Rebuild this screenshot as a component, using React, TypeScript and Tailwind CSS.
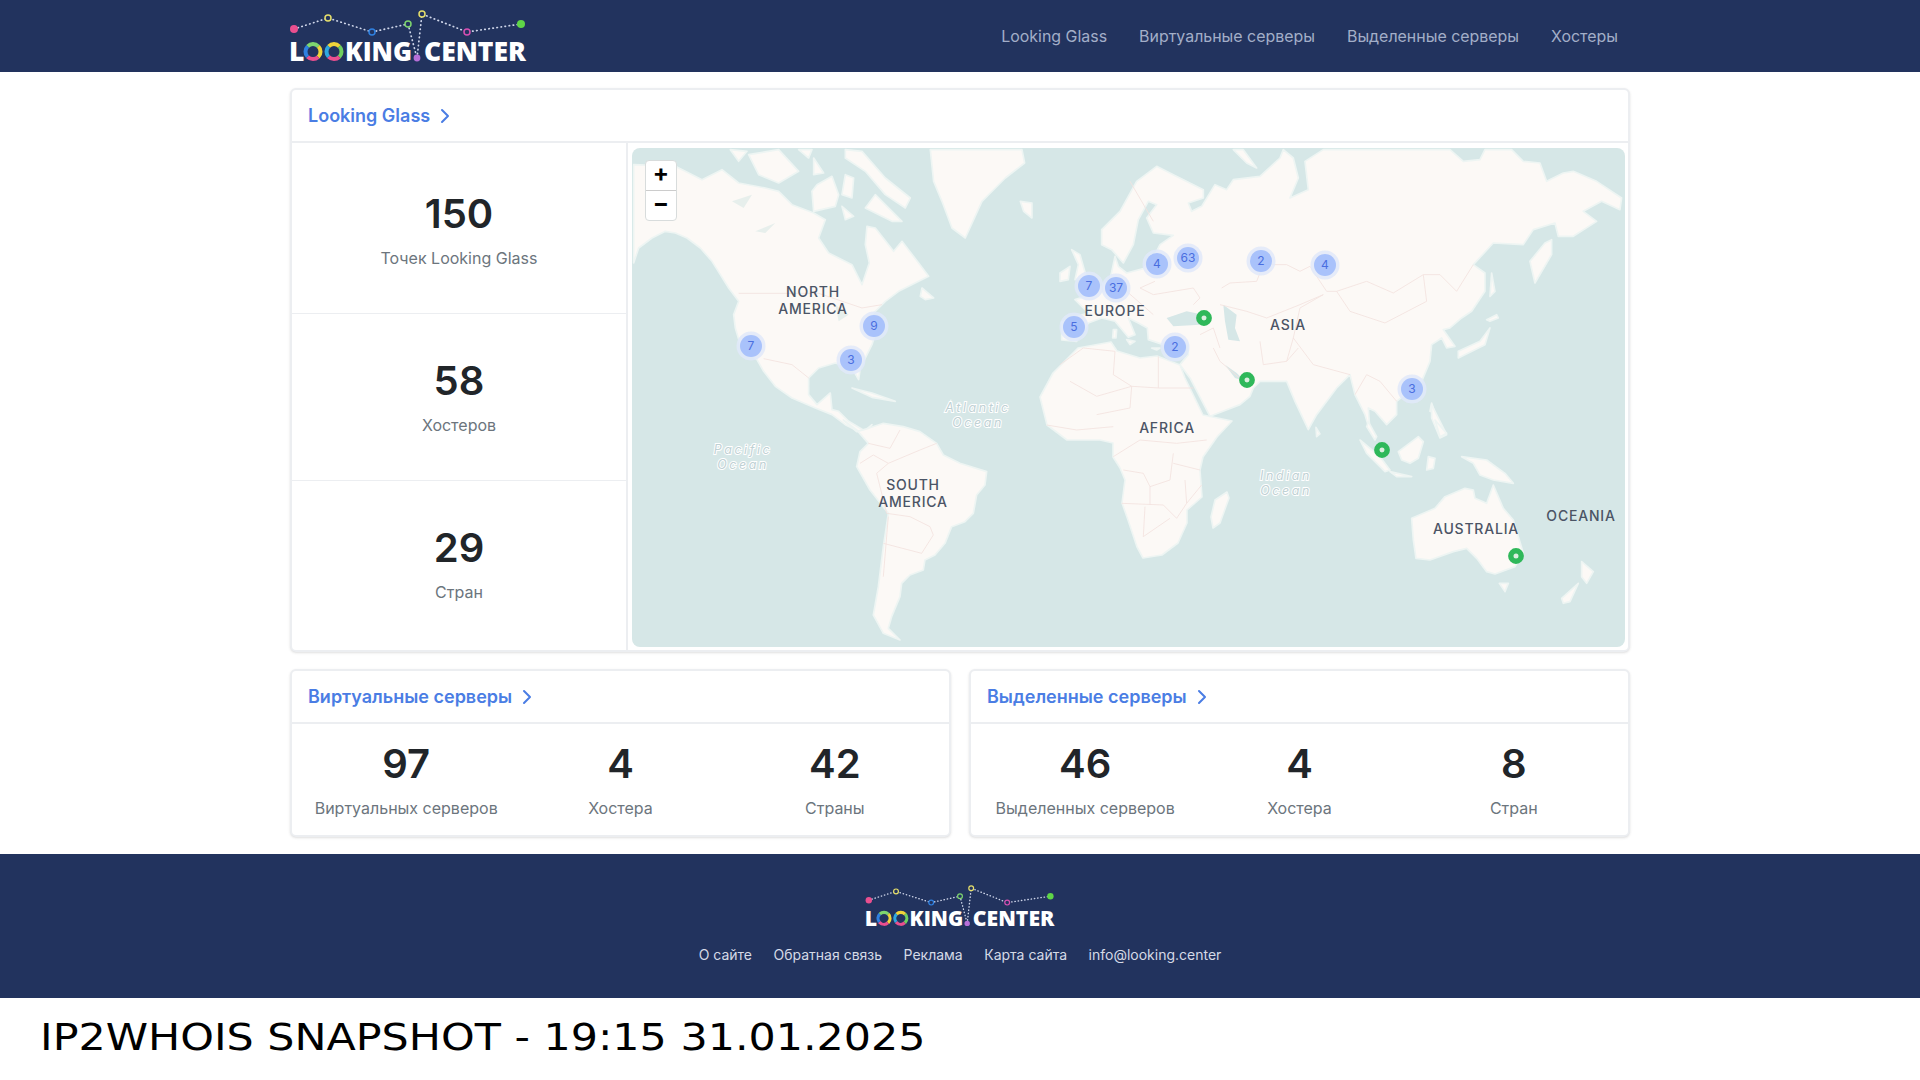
import { ChevronRight } from 'lucide-react';

const LAND = '#fcf9f6';
const WATER = '#d6e7e7';
const COAST = '#eef5f3';
const BORDER = '#f3e2de';

// outlines are traced in separate crops of the map, each group has its own origin (see WorldMap)
const americasNorth = [
  'M5 345 L20 300 L60 270 L100 250 L130 255 L165 270 L205 300 L240 340 L265 380 L290 420 L320 460 L305 500 L310 540 L325 590 L375 635 L395 670 L430 715 L480 750 L550 780 L600 800 L640 830 L690 855 L720 830 L700 850 L650 820 L620 790 L600 785 L595 735 L555 770 L530 740 L530 690 L560 660 L610 645 L660 660 L680 695 L685 660 L720 590 L735 540 L720 500 L760 460 L800 430 L890 385 L860 345 L810 280 L785 310 L730 240 L705 235 L700 290 L712 345 L690 410 L660 350 L590 315 L560 270 L580 215 L545 195 L480 170 L440 130 L400 120 L320 105 L270 65 L210 95 L160 70 L130 55 L5 50 Z',
  'M640 5 L690 10 L760 90 L835 150 L820 180 L760 140 L700 70 L640 30 Z',
  'M730 140 L810 220 L780 220 L700 180 Z',
  'M350 20 L440 5 L500 70 L440 105 L380 80 Z',
  'M295 5 L345 10 L320 40 Z',
  'M500 5 L540 5 L530 30 Z',
  'M545 30 L575 75 L545 80 Z',
  'M555 110 L600 85 L620 140 L610 175 L545 190 L540 130 Z',
  'M640 80 L665 90 L660 150 L630 140 Z',
  'M630 175 L665 205 L640 215 Z',
  // greenland, iceland
  'M895 5 L1170 5 L1178 45 L1120 90 L1050 160 L1000 270 L960 240 L930 160 L905 100 Z',
  'M1165 160 L1200 165 L1200 210 L1175 190 Z',
  // newfoundland, cuba
  'M870 420 L905 450 L880 455 L865 445 Z',
  'M660 720 L720 735 L790 760 L720 748 Z',
];
const americasLakes = [
  'M300 160 L360 140 L335 180 Z',
  'M370 250 L430 225 L400 255 Z',
  'M610 470 L650 500 L620 520 Z',
];
const southAmerica = [
  'M70 0 L110 35 L145 25 L190 10 L250 20 L300 35 L350 70 L370 105 L420 130 L500 155 L495 195 L470 225 L460 280 L435 305 L395 320 L375 370 L345 405 L315 420 L310 450 L270 465 L245 490 L240 530 L215 590 L205 625 L240 660 L190 640 L160 585 L175 500 L190 380 L205 280 L150 210 L110 140 L120 95 L145 70 L110 30 Z',
];
const southAmericaBorders = [
  'M145 70 L210 85 L240 30',
  'M120 130 L160 105 L205 130 L170 160 L200 280',
  'M205 130 L300 90 L350 70',
  'M200 280 L270 290 L330 320 L340 345 L305 400 L190 370',
  'M205 290 L190 470',
];

const eurasia = [
  'M5 576 L5 522 L40 508 L85 495 L45 455 L95 440 L150 395 L165 325 L175 355 L200 375 L250 362 L285 320 L300 290 L340 262 L280 255 L260 210 L290 170 L265 160 L235 215 L220 290 L190 345 L155 305 L125 290 L125 245 L180 190 L230 100 L290 55 L340 80 L430 125 L430 150 L385 165 L395 190 L425 175 L465 110 L500 125 L520 95 L600 85 L660 30 L670 5 L700 30 L715 90 L690 150 L745 125 L735 40 L790 5 L1170 5 L1210 40 L1260 35 L1275 5 L1355 5 L1390 40 L1440 45 L1460 100 L1510 75 L1540 70 L1610 100 L1685 150 L1680 185 L1625 160 L1570 190 L1610 220 L1540 265 L1495 265 L1485 225 L1420 245 L1390 290 L1300 285 L1240 350 L1275 375 L1275 430 L1235 490 L1205 510 L1170 540 L1150 545 L1185 595 L1160 600 L1145 570 L1115 590 L1110 640 L1085 700 L1010 760 L1010 800 L980 830 L945 790 L925 780 L930 850 L915 800 L885 740 L870 680 L830 720 L770 800 L745 845 L705 760 L680 700 L600 700 L580 720 L570 745 L540 770 L450 805 L390 690 L360 650 L385 620 L385 590 L310 590 L265 575 L262 540 L235 525 L205 510 L225 560 L205 568 L165 520 L125 510 L85 525 L50 580 Z',
  // uk, ireland, novaya zemlya
  'M35 305 L60 320 L80 390 L45 395 L55 350 Z',
  'M0 375 L30 355 L25 395 L0 400 Z',
  'M520 5 L550 5 L590 60 L560 45 Z',
  // sicily, sardinia, crete
  'M200 575 L225 580 L210 590 Z',
  'M160 545 L170 545 L168 570 L158 570 Z',
  'M275 600 L300 600 L290 606 Z',
  // kamchatka, sakhalin, hokkaido, honshu
  'M1475 275 L1475 320 L1425 405 L1410 340 L1455 285 Z',
  'M1295 375 L1305 430 L1290 445 Z',
  'M1280 515 L1310 500 L1315 510 L1290 520 Z',
  'M1290 540 L1275 590 L1195 630 L1195 610 L1260 580 Z',
  // sri lanka, taiwan, philippines
  'M768 838 L780 858 L770 866 Z',
  'M1115 765 L1125 795 L1110 790 Z',
  'M1115 770 L1160 860 L1140 870 L1115 810 Z',
];
const eurasiaWater = [
  'M320 510 L380 490 L430 500 L420 530 L340 535 Z',
  'M490 470 L530 500 L525 540 L540 580 L505 575 L495 520 Z',
  'M495 650 L525 690 L555 700 L530 675 Z',
];
const eurasiaBorders = [
  'M485 420 L510 405 L590 400 L610 350 L680 350 L720 370 L750 355 L800 430 L830 430 L920 400 L1000 435 L1090 380 L1140 380 L1190 430 L1240 350',
  'M830 430 L870 490 L975 525 L1100 460 L1090 380',
  'M480 470 L560 490 L620 510 L720 470 L790 440',
  'M790 440 L720 480 L700 570 L760 650 L870 680',
  'M600 580 L610 650 L680 640 L700 570',
  'M460 600 L480 640 L550 700',
  'M680 640 L715 600',
  'M285 400 L240 420 L280 440 L400 420 L420 450 L400 470',
  'M200 430 L280 500',
  'M420 560 L460 540 L480 600',
  'M885 740 L920 680 L960 700 L1010 760',
  'M210 100 L280 220',
  'M0 650 L70 600 L165 610 L160 680 L215 715 L295 720 L295 625',
  'M30 700 L110 745 L215 715 L210 780 L110 800',
  'M295 720 L400 720',
];

const africa =
  'M1111 342 L1117 351 L1140 358 L1157 356 L1180 365 L1185 378 L1203 415 L1232 421 L1217 437 L1203 457 L1200 470 L1202 497 L1187 510 L1187 523 L1178 543 L1162 555 L1143 558 L1137 547 L1128 520 L1122 503 L1125 480 L1120 468 L1113 457 L1113 443 L1100 440 L1067 440 L1047 425 L1040 397 L1053 373 L1078 348 Z';
const madagascar = 'M1227 492 L1229 498 L1220 523 L1213 528 L1211 517 L1215 500 Z';
const africaBorders = [
  'M250 110 L330 60 L440 70 L530 60',
  'M280 150 L340 160 L360 200 L420 180 L430 100',
  'M360 200 L360 255',
  'M275 250 L400 255 L440 295 L470 250',
  'M345 260 L340 350 L420 295',
  'M430 130 L510 150',
  'M465 180 L470 250 L515 195',
  'M50 15 L140 30 L250 20',
];

const oceania = [
  'M90 60 L150 110 L180 150 L165 155 L110 100 Z',
  'M180 155 L245 170 L200 170 Z',
  'M205 95 L265 50 L280 65 L265 115 L240 130 L215 120 Z',
  'M295 110 L315 115 L310 145 L290 150 Z',
  'M115 5 L140 50 L135 60 L110 20 Z',
  'M315 0 L350 40 L330 50 Z',
  'M395 110 L470 120 L525 160 L550 190 L490 180 L450 165 L430 130 Z',
  'M245 295 L315 265 L345 230 L405 205 L430 210 L435 235 L470 250 L490 195 L520 265 L550 300 L580 400 L555 440 L495 462 L470 455 L440 415 L410 385 L370 395 L300 420 L258 415 L250 360 Z',
  'M508 490 L535 490 L525 515 Z',
  'M755 425 L790 455 L770 490 L755 470 Z',
  'M745 490 L720 545 L700 550 L695 535 Z',
];

const clusters = [
  { n: 7, x: 751, y: 346 },
  { n: 9, x: 874, y: 326 },
  { n: 3, x: 851, y: 360 },
  { n: 7, x: 1089, y: 286 },
  { n: 37, x: 1116, y: 288 },
  { n: 5, x: 1074, y: 327 },
  { n: 4, x: 1157, y: 264 },
  { n: 63, x: 1188, y: 258 },
  { n: 2, x: 1261, y: 261 },
  { n: 4, x: 1325, y: 265 },
  { n: 2, x: 1175, y: 347 },
  { n: 3, x: 1412, y: 389 },
];

const greenPins = [
  { x: 1204, y: 318 },
  { x: 1247, y: 380 },
  { x: 1382, y: 450 },
  { x: 1516, y: 556 },
];

const regionLabels = [
  { t: 'NORTH', x: 813, y: 297 },
  { t: 'AMERICA', x: 813, y: 314 },
  { t: 'EUROPE', x: 1115, y: 316 },
  { t: 'ASIA', x: 1288, y: 330 },
  { t: 'AFRICA', x: 1167, y: 433 },
  { t: 'SOUTH', x: 913, y: 490 },
  { t: 'AMERICA', x: 913, y: 507 },
  { t: 'AUSTRALIA', x: 1476, y: 534 },
  { t: 'OCEANIA', x: 1581, y: 521 },
];

const oceanLabels = [
  { t: 'Atlantic', x: 978, y: 412 },
  { t: 'Pacific', x: 743, y: 454 },
  { t: 'Indian', x: 1286, y: 480 },
];

function Shapes({ items }: { items: string[] }) {
  return (
    <>
      {items.map((d) => (
        <path key={d} d={d} fill={LAND} stroke={COAST} strokeWidth="5" strokeLinejoin="round" />
      ))}
    </>
  );
}

function Lines({ items }: { items: string[] }) {
  return (
    <>
      {items.map((d) => (
        <path key={d} d={d} fill="none" stroke={BORDER} strokeWidth="2.5" strokeLinejoin="round" />
      ))}
    </>
  );
}

function WorldMap() {
  return (
    <svg viewBox="632 148 993 499" className="block h-full w-full">
      <rect x="632" y="148" width="993" height="499" fill={WATER} />
      <g transform="translate(632 148) scale(.3333)">
        <Shapes items={americasNorth} />
        {americasLakes.map((d) => (
          <path key={d} d={d} fill="#e7efec" />
        ))}
        <Lines items={['M320 436 L560 436 L690 480 L750 470', 'M395 632 L480 650 L530 690']} />
      </g>
      <g transform="translate(820 420) scale(.3333)">
        <Shapes items={southAmerica} />
        <Lines items={southAmericaBorders} />
      </g>
      <path d={africa} fill={LAND} stroke={COAST} strokeWidth="1.6" strokeLinejoin="round" />
      <path d={madagascar} fill={LAND} stroke={COAST} strokeWidth="1.6" strokeLinejoin="round" />
      <g transform="translate(1060 148) scale(.3333)">
        <Shapes items={eurasia} />
        {eurasiaWater.map((d) => (
          <path key={d} d={d} fill={WATER} />
        ))}
        <Lines items={eurasiaBorders} />
      </g>
      <g transform="translate(1030 420) scale(.3333)">
        <Lines items={africaBorders} />
      </g>
      <g transform="translate(1330 420) scale(.3333)">
        <Shapes items={oceania} />
      </g>
      {regionLabels.map((l) => (
        <text
          key={l.t + l.x}
          x={l.x}
          y={l.y}
          textAnchor="middle"
          fontFamily="Inter, sans-serif"
          fontSize="14"
          fontWeight="500"
          letterSpacing=".8"
          fill="#4b5465"
        >
          {l.t}
        </text>
      ))}
      {oceanLabels.map((l) => (
        <text
          key={l.t}
          textAnchor="middle"
          fontFamily="Inter, sans-serif"
          fontSize="12.4"
          fontStyle="italic"
          letterSpacing="2.6"
          fill="#bfd1d4"
          stroke="#ffffff"
          strokeWidth="2"
          paintOrder="stroke"
        >
          <tspan x={l.x} y={l.y}>
            {l.t}
          </tspan>
          <tspan x={l.x} y={l.y + 15}>
            Ocean
          </tspan>
        </text>
      ))}
      {clusters.map((c) => (
        <g key={c.x}>
          <circle cx={c.x} cy={c.y} r="14.5" fill="#e0e9f9" fillOpacity=".85" />
          <circle cx={c.x} cy={c.y} r="11" fill="#a9c2fb" />
          <text
            x={c.x}
            y={c.y + 4}
            textAnchor="middle"
            fontFamily="Inter, sans-serif"
            fontSize="12"
            fill="#4a6ee0"
          >
            {c.n}
          </text>
        </g>
      ))}
      {greenPins.map((p) => (
        <circle key={p.x} cx={p.x} cy={p.y} r="5.2" fill="#dceee0" stroke="#2fb85a" strokeWidth="5.4" />
      ))}
    </svg>
  );
}

function Ring({ cx, colors }: { cx: number; colors: string[] }) {
  const c = 2 * Math.PI * 7.5;
  const seg = c / colors.length;
  return (
    <g transform={`rotate(-135 ${cx} 51.6)`}>
      {colors.map((col, i) => (
        <circle
          key={col}
          cx={cx}
          cy={51.6}
          r={7.5}
          fill="none"
          stroke={col}
          strokeWidth={4}
          strokeDasharray={`${seg} ${c - seg}`}
          strokeDashoffset={-seg * i}
        />
      ))}
    </g>
  );
}

function Logo({ className }: { className: string }) {
  return (
    <svg viewBox="288 0 240 72" className={className}>
      <g fill="none" stroke="#cfd6ea" strokeWidth="1.7" strokeLinecap="round" strokeDasharray="0.5 3.6">
        <path d="M294 29 L328 18 L372 32 L408 24 L417 58" />
        <path d="M417 58 L422 14 L467 32 L521 24" />
      </g>
      <circle cx="294" cy="29" r="4" fill="#ea4f8f" />
      <circle cx="328" cy="18" r="3" fill="#22335e" stroke="#e6df6b" strokeWidth="1.5" />
      <circle cx="372" cy="32" r="3" fill="#22335e" stroke="#2f80e0" strokeWidth="1.5" />
      <circle cx="408" cy="24" r="3" fill="#22335e" stroke="#7ed56f" strokeWidth="1.5" />
      <circle cx="422" cy="14" r="3" fill="#22335e" stroke="#e6df6b" strokeWidth="1.5" />
      <circle cx="467" cy="32" r="3" fill="#22335e" stroke="#d64fb2" strokeWidth="1.5" />
      <circle cx="521" cy="24" r="4" fill="#5fd647" />
      <circle cx="417" cy="58" r="3.4" fill="#b86fd8" />
      <g fill="#ffffff" fontFamily="'Open Sans', sans-serif" fontWeight="800" fontSize="26.5">
        <text x="289" y="61">L</text>
        <text x="345" y="61" textLength="67" lengthAdjust="spacingAndGlyphs">KING</text>
        <text x="424" y="61" textLength="102" lengthAdjust="spacingAndGlyphs">CENTER</text>
      </g>
      <Ring cx={313} colors={['#7ed56f', '#f0d43a', '#ea4f8f', '#2f80e0']} />
      <Ring cx={334} colors={['#f0d43a', '#6fd05f', '#ea4f8f', '#2fa7e0']} />
    </svg>
  );
}

function CardTitle({ title }: { title: string }) {
  return (
    <div className="flex h-[53px] items-center gap-[3px] border-b-2 border-[#eceef1] px-[16px] text-[18px] font-semibold text-[#4a7de4]">
      {title}
      <ChevronRight size={24} strokeWidth={2} />
    </div>
  );
}

function StatCell({ value, label, className }: { value: string; label: string; className: string }) {
  return (
    <div className={`flex flex-col items-center ${className}`}>
      <div className="text-[40px] leading-[48px] font-semibold text-[#212529]">{value}</div>
      <div className="mt-[8px] text-[16px] leading-[24px] text-[#6c757d]">{label}</div>
    </div>
  );
}

function ServerCard({ title, stats }: { title: string; stats: { value: string; label: string }[] }) {
  return (
    <section className="flex-1 rounded-md border-2 border-[#eceef1] bg-white shadow-sm">
      <CardTitle title={title} />
      <div className="grid h-[111px] grid-cols-3 px-[7px] pt-[16px]">
        {stats.map((s) => (
          <StatCell key={s.label} value={s.value} label={s.label} className="" />
        ))}
      </div>
    </section>
  );
}

export default function App() {
  return (
    <div className="flex h-[1080px] flex-col overflow-hidden bg-white font-['Inter',sans-serif]">
      <header className="h-[72px] bg-[#22335e]">
        <div className="mx-auto flex h-full w-[1340px] items-center justify-between pr-[12px]">
          <Logo className="ml-[-2px] h-[72px] w-[240px]" />
          <nav className="flex gap-8 pt-[2px] text-[15.93px] text-[#a3aec8]">
            <span>Looking Glass</span>
            <span>Виртуальные серверы</span>
            <span>Выделенные серверы</span>
            <span>Хостеры</span>
          </nav>
        </div>
      </header>

      <main className="mx-auto flex h-[782px] w-[1340px] flex-col gap-[17px] pt-[16px]">
        <section className="h-[564px] rounded-md border-2 border-[#eceef1] bg-white shadow-sm">
          <CardTitle title="Looking Glass" />
          <div className="flex h-[507px]">
            <div className="flex w-[336px] flex-col border-r-2 border-[#eceef1]">
              <StatCell value="150" label="Точек Looking Glass" className="h-[171px] border-b border-[#eceef1] pt-[47px]" />
              <StatCell value="58" label="Хостеров" className="h-[167px] border-b border-[#eceef1] pt-[43px]" />
              <StatCell value="29" label="Стран" className="h-[169px] pt-[43px]" />
            </div>
            <div className="flex-1 pt-[5px] pr-[3px] pb-[3px] pl-[4px]">
              <div className="relative h-full overflow-hidden rounded-lg">
                <WorldMap />
                <div className="absolute top-[12px] left-[13px] w-[32px] rounded-sm border border-[#d8dcdc] bg-white text-center text-[24px] leading-[24px] font-bold text-black">
                  <div className="h-[30px] border-b border-[#ccc]">+</div>
                  <div className="h-[29px]">−</div>
                </div>
              </div>
            </div>
          </div>
        </section>

        <div className="flex gap-[18px]">
          <ServerCard
            title="Виртуальные серверы"
            stats={[
              { value: '97', label: 'Виртуальных серверов' },
              { value: '4', label: 'Хостера' },
              { value: '42', label: 'Страны' },
            ]}
          />
          <ServerCard
            title="Выделенные серверы"
            stats={[
              { value: '46', label: 'Выделенных серверов' },
              { value: '4', label: 'Хостера' },
              { value: '8', label: 'Стран' },
            ]}
          />
        </div>
      </main>

      <footer className="flex h-[144px] flex-col items-center bg-[#22335e] pt-[23px]">
        <Logo className="h-[57.6px] w-[192px]" />
        <div className="mt-[10px] flex gap-[21.5px] text-[14px] leading-[20px] text-[#d5dae6]">
          <span>О сайте</span>
          <span>Обратная связь</span>
          <span>Реклама</span>
          <span>Карта сайта</span>
          <span>info@looking.center</span>
        </div>
      </footer>

      <div className="flex-1 pt-[18px] pl-[40px] font-['DejaVu_Sans',sans-serif] text-[37px] leading-[44px] text-black">
        <span className="inline-block origin-left scale-x-[1.157]">IP2WHOIS SNAPSHOT - 19:15 31.01.2025</span>
      </div>
    </div>
  );
}
